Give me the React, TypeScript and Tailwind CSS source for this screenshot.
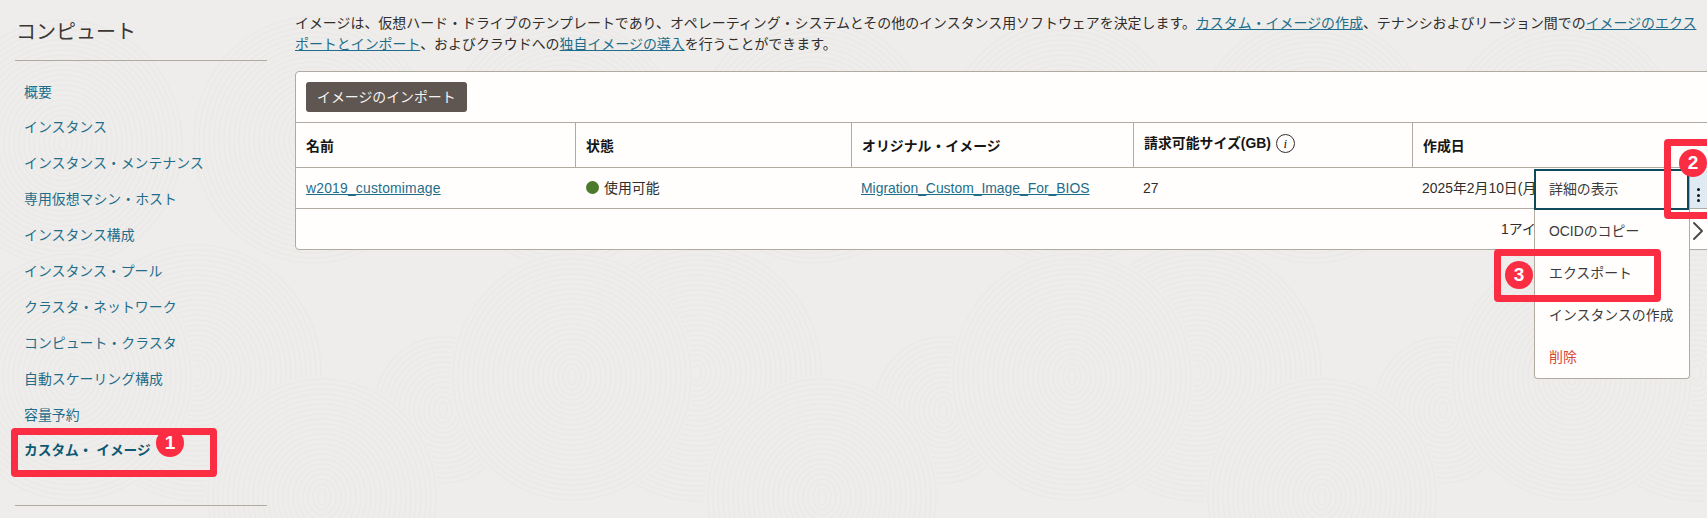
import React from 'react'
import { ChevronRight } from 'lucide-react'

const navItems = [
  '概要',
  'インスタンス',
  'インスタンス・メンテナンス',
  '専用仮想マシン・ホスト',
  'インスタンス構成',
  'インスタンス・プール',
  'クラスタ・ネットワーク',
  'コンピュート・クラスタ',
  '自動スケーリング構成',
  '容量予約',
]

// --- Background swirls (x, y, radius), back to front, repeating every 500px ---

const swirls = [
  [443, 410, 70],
  [63, 143, 120],
  [313, 140, 120],
  [197, 373, 125],
  [322, 497, 115],
  [72, 377, 120],
]

function Swirl({ x, y, r }: { x: number; y: number; r: number }) {
  const rings = []
  for (let i = 4; i <= r; i += 5) rings.push(i)
  return (
    <g>
      <ellipse cx={x} cy={y} rx={r + 2} ry={r + 6} fill="#eeedeb" />
      {rings.map((ring) => (
        <ellipse key={ring} cx={x} cy={y} rx={ring} ry={ring + 4} fill="none" stroke="#eae9e7" strokeWidth="1.5" />
      ))}
    </g>
  )
}

function Background() {
  const offsets = [-500, 0, 500, 1000, 1500]
  return (
    <svg className="absolute inset-0" width="1707" height="518" aria-hidden="true">
      {swirls.map(([x, y, r], i) =>
        offsets.map((dx) => <Swirl key={`${i}-${dx}`} x={x + dx} y={y} r={r} />),
      )}
    </svg>
  )
}

// --- Annotations ---

function Badge({ children, className }: { children: React.ReactNode; className: string }) {
  return (
    <span
      className={`absolute z-30 flex h-[28px] w-[28px] items-center justify-center rounded-full bg-[#fb2d43] text-[19px] font-bold text-white ${className}`}
    >
      {children}
    </span>
  )
}

function Callout({ className }: { className: string }) {
  return <div className={`absolute z-20 rounded-[4px] border-[7px] border-[#fb2d43] ${className}`} />
}

// --- Sidebar ---

function Sidebar() {
  return (
    <aside className="relative w-[295px] shrink-0 pl-[15px] pr-[28px]">
      <h1 className="flex h-[61px] items-center border-b border-[#b0aaa3] pl-px pt-1 text-[20px] font-normal text-[#3a3734]">
        コンピュート
      </h1>
      <nav className="mt-[13px] flex flex-col pl-[9px] text-[13.9px] text-[#1f6d8a]">
        {navItems.map((item) => (
          <a key={item} className="flex h-[35.95px] items-center">
            {item}
          </a>
        ))}
        <a className="flex h-[35.95px] items-center text-[13.7px] font-bold text-[#0f5a73]">カスタム・ イメージ</a>
      </nav>
      <div className="mt-[36px] border-b border-[#b0aaa3]" />
    </aside>
  )
}

// --- Table ---

function HeaderCell({ children, first }: { children: React.ReactNode; first?: boolean }) {
  return (
    <div className={`flex items-center px-[10px] pt-[2px] text-[13.9px] font-bold text-[#161513] ${first ? '' : 'border-l border-[#b0aaa3]'}`}>
      {children}
    </div>
  )
}

function ImageTable() {
  return (
    <div className="mt-[16px] h-[179px] w-[1440px] rounded-[4px] border border-[#b0aaa3] bg-[#fffefd] text-[13.9px] text-[#312d2a]">
      <div className="flex h-[51px] items-center border-b border-[#b0aaa3] pl-[10px]">
        <button className="h-[30px] rounded-[3px] bg-[#5f5651] px-[11px] text-[13.9px] text-[#f5f4f2]">
          イメージのインポート
        </button>
      </div>
      <div className="grid h-[45px] grid-cols-[279px_276px_282px_279px_1fr] border-b border-[#b0aaa3]">
        <HeaderCell first>名前</HeaderCell>
        <HeaderCell>状態</HeaderCell>
        <HeaderCell>オリジナル・イメージ</HeaderCell>
        <HeaderCell>
          <span className="-mt-[5px] flex items-center gap-[5px]">
            請求可能サイズ(GB)
            <span className="flex h-[19px] w-[19px] items-center justify-center rounded-full border border-[#312d2a] font-['Liberation_Serif',serif] text-[13px] font-normal italic">
              i
            </span>
          </span>
        </HeaderCell>
        <HeaderCell>作成日</HeaderCell>
      </div>
      <div className="grid h-[41px] grid-cols-[279px_276px_282px_279px_1fr] items-center border-b border-[#b0aaa3]">
        <a className="pl-[10px] tracking-[0.2px] text-[#1f6d8a] underline">w2019_customimage</a>
        <div className="flex items-center gap-[5px] pl-[11px]">
          <span className="h-[13px] w-[13px] rounded-full bg-[#4b7a2a]" />
          使用可能
        </div>
        <a className="pl-[10px] text-[#1f6d8a] underline">Migration_Custom_Image_For_BIOS</a>
        <div className="pl-[10px]">27</div>
        <div className="whitespace-nowrap pl-[10px]">2025年2月10日(月) 10:21:42 UTC</div>
      </div>
      <div className="flex h-[40px] items-center pl-[1205px]">1アイテム</div>
    </div>
  )
}

// --- Row actions menu ---

function RowMenu() {
  return (
    <div className="absolute left-[1534px] top-[169px] z-10 w-[156px] rounded-b-[4px] border-x border-b border-[#b0aaa3] bg-[#fffefd] text-[13.9px] text-[#3d3b39]">
      <div className="-ml-px flex h-[41px] items-center border-2 border-[#0e4a5c] pl-[13px]">詳細の表示</div>
      <div className="flex h-[42px] items-center pl-[14px]">OCIDのコピー</div>
      <div className="flex h-[42px] items-center pl-[14px]">エクスポート</div>
      <div className="flex h-[42px] items-center pl-[14px]">インスタンスの作成</div>
      <div className="flex h-[42px] items-center pl-[14px] text-[#d5493a]">削除</div>
    </div>
  )
}

export default function App() {
  return (
    <div className="relative flex h-[518px] w-[1707px] overflow-hidden bg-[#eeedeb] font-['Liberation_Sans','Noto_Sans_CJK_JP',sans-serif]">
      <Background />
      <Sidebar />
      <main className="relative min-w-0 flex-1 pt-[13px]">
        <p className="w-[1408px] text-[13.95px] leading-[21px] text-[#312d2a]">
          イメージは、仮想ハード・ドライブのテンプレートであり、オペレーティング・システムとその他のインスタンス用ソフトウェアを決定します。
          <a className="text-[#1f6d8a] underline">カスタム・イメージの作成</a>
          、テナンシおよびリージョン間での
          <a className="text-[#1f6d8a] underline">イメージのエクスポートとインポート</a>
          、およびクラウドへの
          <a className="text-[#1f6d8a] underline">独自イメージの導入</a>
          を行うことができます。
        </p>
        <ImageTable />
      </main>

      <RowMenu />
      <div className="absolute left-[1690px] top-[168px] flex h-[40px] w-[17px] items-center justify-center bg-[#dfeaf2] text-[#161513]">
        <span className="flex flex-col gap-[2.5px] pt-[14px]">
          <i className="block h-[3px] w-[3px] rounded-full bg-[#161513]" />
          <i className="block h-[3px] w-[3px] rounded-full bg-[#161513]" />
          <i className="block h-[3px] w-[3px] rounded-full bg-[#161513]" />
        </span>
      </div>
      <ChevronRight className="absolute left-[1682px] top-[215px] text-[#4a4744]" size={32} strokeWidth={1.4} />

      <Callout className="left-[11px] top-[428px] h-[49px] w-[206px]" />
      <Badge className="left-[156px] top-[429px]">1</Badge>
      <Callout className="left-[1664px] top-[139px] h-[80px] w-[60px]" />
      <Badge className="left-[1679px] top-[149px]">2</Badge>
      <Callout className="left-[1494px] top-[249px] h-[53px] w-[167px]" />
      <Badge className="left-[1505px] top-[261px]">3</Badge>
    </div>
  )
}
